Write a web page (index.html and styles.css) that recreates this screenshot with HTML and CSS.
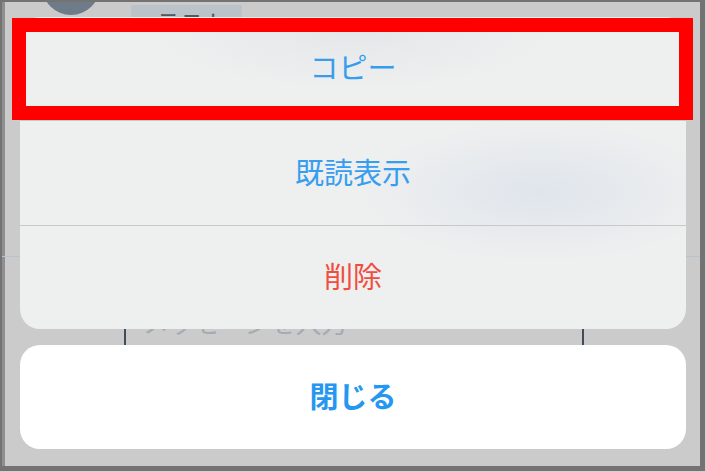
FILE: index.html
```html
<!DOCTYPE html>
<html lang="ja">
<head>
<meta charset="utf-8">
<title>Action sheet</title>
<link rel="stylesheet" href="styles.css">
</head>
<body>
<div class="frame">
  <div class="chat">
    <div class="msg-row">
      <div class="avatar"></div>
      <div class="bubble">テスト</div>
    </div>
    <div class="inputbar">
      <div class="field">メッセージを入力</div>
    </div>
  </div>
  <div class="sheet">
    <div class="group">
      <div class="action">コピー</div>
      <div class="action">既読表示</div>
      <div class="action danger">削除</div>
    </div>
    <div class="cancel">閉じる</div>
  </div>
  <div class="highlight"></div>
</div>
</body>
</html>
```
FILE: styles.css
```css
html, body {
  margin: 0;
  padding: 0;
}
body {
  background: #d2d2d2;
  width: 706px;
  height: 472px;
  overflow: hidden;
  font-family: "Noto Sans CJK JP", "Noto Sans", sans-serif;
}
.frame {
  position: relative;
  box-sizing: border-box;
  width: 705px;
  height: 471px;
  border-style: solid;
  border-color: #737373;
  border-width: 2px 5px 5px 2px;
  background: #cbcbcb;
  box-shadow: inset 3px 0 0 #8f8f8f;
  overflow: hidden;
}
.chat {
  display: flex;
  flex-direction: column;
  height: 100%;
}
.msg-row {
  display: flex;
  align-items: flex-start;
  height: 254px;
  flex-shrink: 0;
  padding-left: 40px;
  gap: 31px;
}
.avatar {
  width: 58px;
  height: 58px;
  border-radius: 50%;
  background: #6e7b89;
  margin-top: -45px;
}
.bubble {
  margin-top: 3px;
  width: 86px;
  height: 60px;
  padding: 5px 0 0 25px;
  background: #bcc3c8;
  color: #505860;
  font-size: 24px;
  line-height: 1;
}
.inputbar {
  flex: 1;
  border-top: 1px solid #b8c3cd;
  padding-top: 38px;
}
.field {
  box-sizing: border-box;
  margin-left: 122px;
  width: 460px;
  height: 56px;
  border-left: 2px solid #414c57;
  border-right: 2px solid #414c57;
  padding-left: 17px;
  font-size: 26px;
  line-height: 54px;
  color: #a3abb3;
  letter-spacing: -0.5px;
}
.sheet {
  position: absolute;
  inset: 0;
  display: flex;
  flex-direction: column;
  padding: 15px 14px 0 18px;
  gap: 16px;
}
.group {
  border-radius: 20px;
  overflow: hidden;
  background:
    radial-gradient(ellipse 180px 70px at 78% 56%, rgba(222, 228, 236, 0.9), rgba(222, 228, 236, 0)),
    radial-gradient(ellipse 200px 60px at 50% 4%, rgba(226, 229, 232, 0.8), rgba(226, 229, 232, 0)),
    #eeefef;
}
.action {
  box-sizing: border-box;
  height: 104px;
  padding-bottom: 5px;
  display: flex;
  align-items: center;
  justify-content: center;
  font-size: 29px;
  color: #369def;
  border-bottom: 1px solid #c6c8ca;
}
.action:nth-child(2) {
  height: 105px;
}
.action:last-child {
  height: 103px;
  border-bottom: none;
}
.action.danger {
  color: #f14c40;
}
.cancel {
  box-sizing: border-box;
  height: 104px;
  padding-bottom: 5px;
  border-radius: 20px;
  background: #ffffff;
  display: flex;
  align-items: center;
  justify-content: center;
  font-size: 29px;
  font-weight: 700;
  color: #2597f0;
}
.highlight {
  position: absolute;
  left: 10px;
  top: 16px;
  width: 681px;
  height: 102px;
  box-sizing: border-box;
  border: 14px solid #ff0000;
}
```
